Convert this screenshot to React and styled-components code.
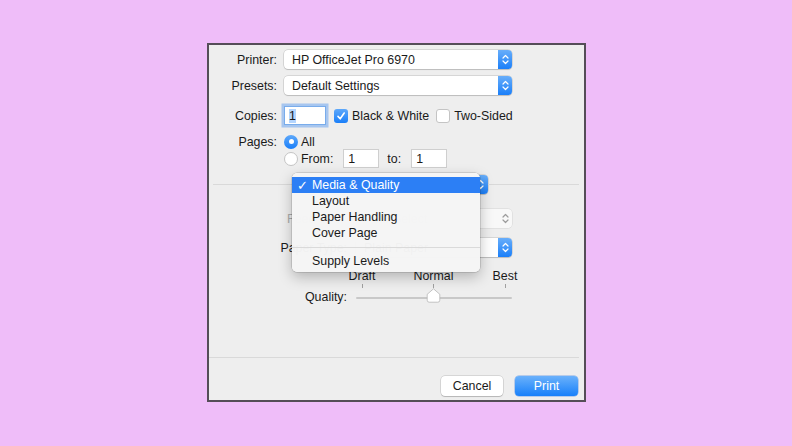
import React from 'react';
import styled, { createGlobalStyle } from 'styled-components';

const GlobalStyle = createGlobalStyle`
  html, body { margin: 0; padding: 0; }
  body {
    background: #efbdf9;
    font-family: "Liberation Sans", Arial, sans-serif;
    font-size: 12.4px;
    color: #1a1a1a;
  }
`;

const Stage = styled.div`
  width: 792px;
  height: 446px;
  box-sizing: border-box;
  padding: 43px 0 0 207px;
`;

const Dialog = styled.div`
  box-sizing: border-box;
  width: 379px;
  height: 359px;
  border: 2px solid #554d58;
  background: #eeeeee;
  display: flex;
  flex-direction: column;
`;

const Form = styled.div`
  padding-top: 5px;
  display: flex;
  flex-direction: column;
`;

const FieldRow = styled.div`
  display: flex;
  align-items: center;
  height: ${p => p.$h || 19}px;
  margin-top: ${p => p.$mt || 0}px;
`;

const Label = styled.span`
  flex: none;
  width: ${p => p.$w || 68}px;
  margin-right: ${p => p.$gap || 7}px;
  text-align: right;
  white-space: nowrap;
  color: ${p => (p.$disabled ? '#ababab' : '#1a1a1a')};
`;

const Popup = styled.div`
  box-sizing: border-box;
  width: ${p => p.$w}px;
  height: 19px;
  display: flex;
  align-items: center;
  padding-left: 8px;
  border-radius: 4px;
  background: ${p => (p.$disabled ? '#f8f8f8' : '#fff')};
  color: ${p => (p.$disabled ? '#b0b0b0' : '#1a1a1a')};
  box-shadow: ${p =>
    p.$disabled
      ? '0 0 0 0.5px rgba(0,0,0,0.1)'
      : '0 0 0 0.5px rgba(0,0,0,0.2), 0 1px 1px rgba(0,0,0,0.12)'};
`;

const PopupText = styled.span`
  flex: 1;
  white-space: nowrap;
  overflow: hidden;
`;

const Stepper = styled.span`
  width: 14px;
  align-self: stretch;
  display: flex;
  align-items: center;
  justify-content: center;
  border-radius: 0 4px 4px 0;
  background: ${p => (p.$disabled ? 'transparent' : 'linear-gradient(#68aefa, #1b7ff9)')};
  color: ${p => (p.$disabled ? '#9c9c9c' : '#fff')};
`;

const Chevrons = () => (
  <svg width="7" height="11" viewBox="0 0 7 11" fill="none" stroke="currentColor" strokeWidth="1.2" strokeLinecap="round" strokeLinejoin="round">
    <path d="M1 4 3.5 1.5 6 4M1 7 3.5 9.5 6 7" />
  </svg>
);

const PopupButton = ({ w, disabled, children }) => (
  <Popup $w={w} $disabled={disabled}>
    <PopupText>{children}</PopupText>
    <Stepper $disabled={disabled}><Chevrons /></Stepper>
  </Popup>
);

const NumberField = styled.div`
  box-sizing: border-box;
  flex: none;
  width: ${p => p.$w}px;
  height: 19px;
  margin-left: ${p => p.$ml || 0}px;
  display: flex;
  align-items: center;
  padding-left: 4px;
  background: #fff;
  border: 1px solid ${p => (p.$focused ? '#79aceb' : '#cfcfcf')};
  box-shadow: ${p => (p.$focused ? '0 0 0 2.5px rgba(110,165,240,0.55)' : 'none')};
`;

const Selected = styled.span`
  background: #b4d5fe;
`;

const Box = styled.span`
  box-sizing: border-box;
  flex: none;
  width: 14px;
  height: 14px;
  margin-left: ${p => p.$ml || 0}px;
  display: flex;
  align-items: center;
  justify-content: center;
  border-radius: ${p => (p.$round ? '50%' : '3px')};
  background: ${p => (p.$on ? 'linear-gradient(#5ea8fa, #1a7ff9)' : '#fff')};
  border: ${p => (p.$on ? 'none' : '1px solid #c4c4c4')};
`;

const Dot = styled.span`
  width: 5px;
  height: 5px;
  border-radius: 50%;
  background: #fff;
`;

const Tick = () => (
  <svg width="10" height="10" viewBox="0 0 10 10" fill="none" stroke="#fff" strokeWidth="1.6" strokeLinecap="round" strokeLinejoin="round">
    <path d="M2 5.4 4.2 7.8 8.2 2" />
  </svg>
);

const Caption = styled.span`
  margin-left: ${p => p.$ml || 4}px;
  white-space: nowrap;
`;

const PanelDivider = styled.div`
  position: relative;
  margin: 7px 5px 0 4px;
  display: grid;
  grid-template-columns: 1fr 183px 1fr;
  align-items: center;
`;

const Rule = styled.div`
  height: 1px;
  background: #d9d9d9;
`;

const Menu = styled.div`
  position: absolute;
  left: 79px;
  top: -2px;
  width: 188px;
  box-sizing: border-box;
  padding: 4px 0 3px;
  border-radius: 5px;
  background: rgba(245, 245, 245, 0.98);
  box-shadow: 0 0 0 0.5px rgba(0, 0, 0, 0.22), 0 5px 14px rgba(0, 0, 0, 0.25);
  z-index: 2;
`;

const MenuItem = styled.div`
  display: flex;
  align-items: center;
  height: 16px;
  background: ${p => (p.$active ? '#2c7ff5' : 'transparent')};
  color: ${p => (p.$active ? '#fff' : '#1a1a1a')};
`;

const MenuCheck = styled.span`
  width: 20px;
  box-sizing: border-box;
  padding-left: 5px;
  font-size: 13px;
`;

const MenuSeparator = styled.div`
  height: 1px;
  margin: 6px 0 5px;
  background: #dadada;
`;

const Panel = styled.div`
  display: flex;
  flex-direction: column;
`;

const SliderRow = styled.div`
  display: flex;
  align-items: flex-end;
  margin-top: 12px;
`;

const Slider = styled.div`
  width: 156px;
  display: flex;
  flex-direction: column;
`;

const Marks = styled.div`
  display: flex;
  justify-content: space-between;
  padding: 0 7px 0 6px;
  height: ${p => p.$h}px;
  margin-top: ${p => p.$mt || 0}px;
`;

const Mark = styled.div`
  width: 0;
  display: flex;
  flex-direction: column;
  align-items: center;
  white-space: nowrap;
`;

const TickLine = styled.div`
  width: 1px;
  height: 4px;
  background: #a0a0a0;
`;

const TrackArea = styled.div`
  position: relative;
  height: 14px;
  display: flex;
  align-items: center;
`;

const Track = styled.div`
  flex: 1;
  height: 2px;
  margin-top: 4px;
  border-radius: 1px;
  background: #c8c8c8;
`;

const Knob = styled.svg`
  position: absolute;
  left: 70px;
  top: -1px;
`;

const SliderLabel = styled(Label)`
  height: 14px;
  line-height: 14px;
  margin-bottom: -1px;
`;

const Spacer = styled.div`
  flex: 1;
`;

const Footer = styled.div`
  display: flex;
  flex-direction: column;
`;

const FooterRule = styled(Rule)`
  margin-right: 5px;
`;

const ButtonBar = styled.div`
  display: flex;
  justify-content: flex-end;
  gap: 12px;
  padding: 18px 6px 4px 0;
`;

const Button = styled.button`
  box-sizing: border-box;
  width: ${p => p.$w}px;
  height: 20px;
  padding: 0;
  border: none;
  border-radius: 4px;
  font: inherit;
  background: ${p => (p.$primary ? 'linear-gradient(#6ab1fb, #1880fa)' : '#fff')};
  color: ${p => (p.$primary ? '#fff' : '#1a1a1a')};
  box-shadow: ${p =>
    p.$primary
      ? '0 0 0 0.5px rgba(20,100,220,0.5)'
      : '0 0 0 0.5px rgba(0,0,0,0.2), 0 1px 1px rgba(0,0,0,0.15)'};
`;

const menuItems = ['Media & Quality', 'Layout', 'Paper Handling', 'Cover Page'];
const scale = ['Draft', 'Normal', 'Best'];

export default function App() {
  return (
    <>
      <GlobalStyle />
      <Stage>
        <Dialog>
          <Form>
            <FieldRow>
              <Label>Printer:</Label>
              <PopupButton w={228}>HP OfficeJet Pro 6970</PopupButton>
            </FieldRow>
            <FieldRow $mt={7}>
              <Label>Presets:</Label>
              <PopupButton w={228}>Default Settings</PopupButton>
            </FieldRow>
            <FieldRow $mt={11}>
              <Label>Copies:</Label>
              <NumberField $w={42} $focused><Selected>1</Selected></NumberField>
              <Box $on $ml={8}><Tick /></Box>
              <Caption>Black &amp; White</Caption>
              <Box $ml={7} />
              <Caption>Two-Sided</Caption>
            </FieldRow>
            <FieldRow $h={15} $mt={9}>
              <Label>Pages:</Label>
              <Box $round $on><Dot /></Box>
              <Caption $ml={3}>All</Caption>
            </FieldRow>
            <FieldRow>
              <Label />
              <Box $round />
              <Caption $ml={3}>From:</Caption>
              <NumberField $w={36} $ml={10}>1</NumberField>
              <Caption $ml={8}>to:</Caption>
              <NumberField $w={36} $ml={10}>1</NumberField>
            </FieldRow>
          </Form>

          <PanelDivider>
            <Rule />
            <PopupButton w={183}>Media &amp; Quality</PopupButton>
            <Rule />
            <Menu>
              {menuItems.map((item, i) => (
                <MenuItem key={item} $active={i === 0}>
                  <MenuCheck>{i === 0 ? '✓' : ''}</MenuCheck>
                  {item}
                </MenuItem>
              ))}
              <MenuSeparator />
              <MenuItem>
                <MenuCheck />
                Supply Levels
              </MenuItem>
            </Menu>
          </PanelDivider>

          <Panel>
            <FieldRow $mt={15}>
              <Label $w={138} $gap={9} $disabled>Feed from:</Label>
              <PopupButton w={156} disabled>Auto Select</PopupButton>
            </FieldRow>
            <FieldRow $mt={10}>
              <Label $w={138} $gap={9}>Paper Type:</Label>
              <PopupButton w={156}>Plain Paper</PopupButton>
            </FieldRow>
            <SliderRow>
              <SliderLabel $w={138} $gap={9}>Quality:</SliderLabel>
              <Slider>
                <Marks $h={14}>
                  {scale.map(s => <Mark key={s}>{s}</Mark>)}
                </Marks>
                <Marks $h={5} $mt={1}>
                  {scale.map(s => <Mark key={s}><TickLine /></Mark>)}
                </Marks>
                <TrackArea>
                  <Track />
                  <Knob width="15" height="15" viewBox="0 0 15 15">
                    <path d="M7.5 0.8 13.8 6.3V12.2a2 2 0 0 1-2 2H3.2a2 2 0 0 1-2-2V6.3Z" fill="#fff" stroke="#b5b5b5" strokeWidth="0.8" />
                  </Knob>
                </TrackArea>
              </Slider>
            </SliderRow>
          </Panel>

          <Spacer />

          <Footer>
            <FooterRule />
            <ButtonBar>
              <Button $w={62}>Cancel</Button>
              <Button $w={63} $primary>Print</Button>
            </ButtonBar>
          </Footer>
        </Dialog>
      </Stage>
    </>
  );
}
